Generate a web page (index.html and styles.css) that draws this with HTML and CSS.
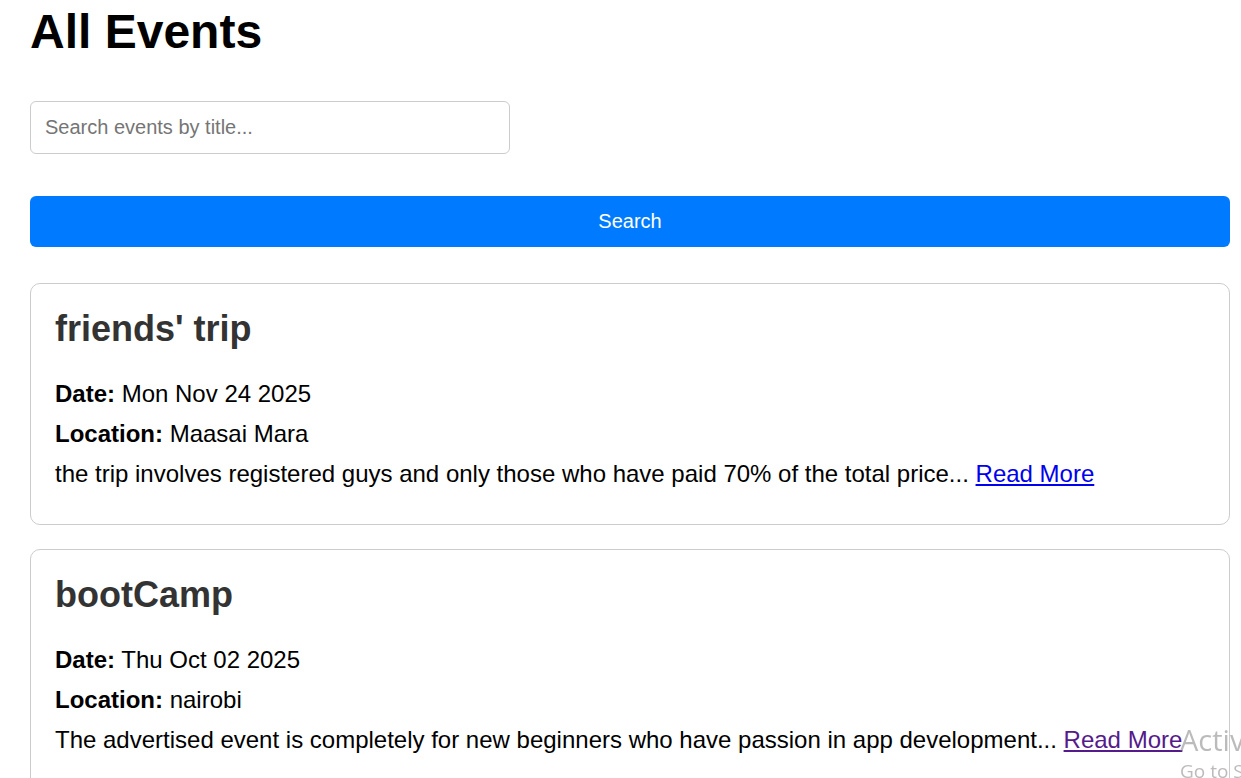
FILE: index.html
```html
<!DOCTYPE html>
<html lang="en">
<head>
<meta charset="utf-8">
<title>All Events</title>
<link rel="stylesheet" href="styles.css">
</head>
<body>
<main class="page">
  <h1 class="page-title">All Events</h1>
  <form class="search-form">
    <input class="search-input" type="text" placeholder="Search events by title...">
    <button class="search-button" type="button">Search</button>
  </form>
  <section class="event-list">
    <article class="event-card">
      <h2 class="event-title">friends' trip</h2>
      <p class="event-line"><strong>Date:</strong> Mon Nov 24 2025</p>
      <p class="event-line"><strong>Location:</strong> Maasai Mara</p>
      <p class="event-line">the trip involves registered guys and only those who have paid 70% of the total price... <a class="read-more" href="#">Read More</a></p>
    </article>
    <article class="event-card">
      <h2 class="event-title">bootCamp</h2>
      <p class="event-line"><strong>Date:</strong> Thu Oct 02 2025</p>
      <p class="event-line"><strong>Location:</strong> nairobi</p>
      <p class="event-line">The advertised event is completely for new beginners who have passion in app development... <a class="read-more visited" href="#">Read More</a></p>
    </article>
  </section>
</main>
<div class="os-watermark">
  <div class="wm-title">Activate Windows</div>
  <div class="wm-sub">Go to Settings to activate Windows.</div>
</div>
</body>
</html>
```
FILE: styles.css
```css
html, body {
  margin: 0;
  padding: 0;
  overflow: hidden;
  background: #fff;
}

body {
  font-family: "Liberation Sans", Arial, sans-serif;
  color: #000;
}

.page {
  width: 1200px;
  margin-left: 30px;
}

.page-title {
  font-size: 48px;
  font-weight: bold;
  margin: 4px 0 42px;
  line-height: normal;
}

.search-form {
  display: flex;
  flex-direction: column;
  align-items: flex-start;
  gap: 42px;
  margin-bottom: 36px;
}

.search-input {
  box-sizing: border-box;
  width: 480px;
  height: 53px;
  border: 1px solid #ccc;
  border-radius: 6px;
  padding: 0 14px;
  font-family: "Liberation Sans", Arial, sans-serif;
  font-size: 20px;
  color: #000;
  outline: none;
}

.search-input::placeholder {
  color: #757575;
}

.search-button {
  width: 100%;
  height: 51px;
  border: none;
  border-radius: 6px;
  background: #007bff;
  color: #fff;
  font-family: "Liberation Sans", Arial, sans-serif;
  font-size: 20px;
  cursor: pointer;
}

.event-list {
  display: flex;
  flex-direction: column;
  gap: 24px;
}

.event-card {
  border: 1px solid #ccc;
  border-radius: 10px;
  padding: 24px;
}

.event-title {
  font-size: 36px;
  font-weight: bold;
  color: #333;
  margin: 0 0 30px;
}

.event-line {
  font-size: 24px;
  margin: 12px 0;
}

.event-title + .event-line {
  margin-top: 0;
}

.read-more {
  color: #0000ee;
  text-decoration: underline;
}

.read-more.visited {
  color: #551a8b;
}

.os-watermark {
  position: fixed;
  left: 1180px;
  top: 722px;
  white-space: nowrap;
  color: rgba(120, 120, 120, 0.5);
  font-family: "Open Sans", "Noto Sans", sans-serif;
}

.wm-title {
  font-size: 29px;
  line-height: 36px;
}

.wm-sub {
  font-size: 19px;
  line-height: 26px;
}
```
